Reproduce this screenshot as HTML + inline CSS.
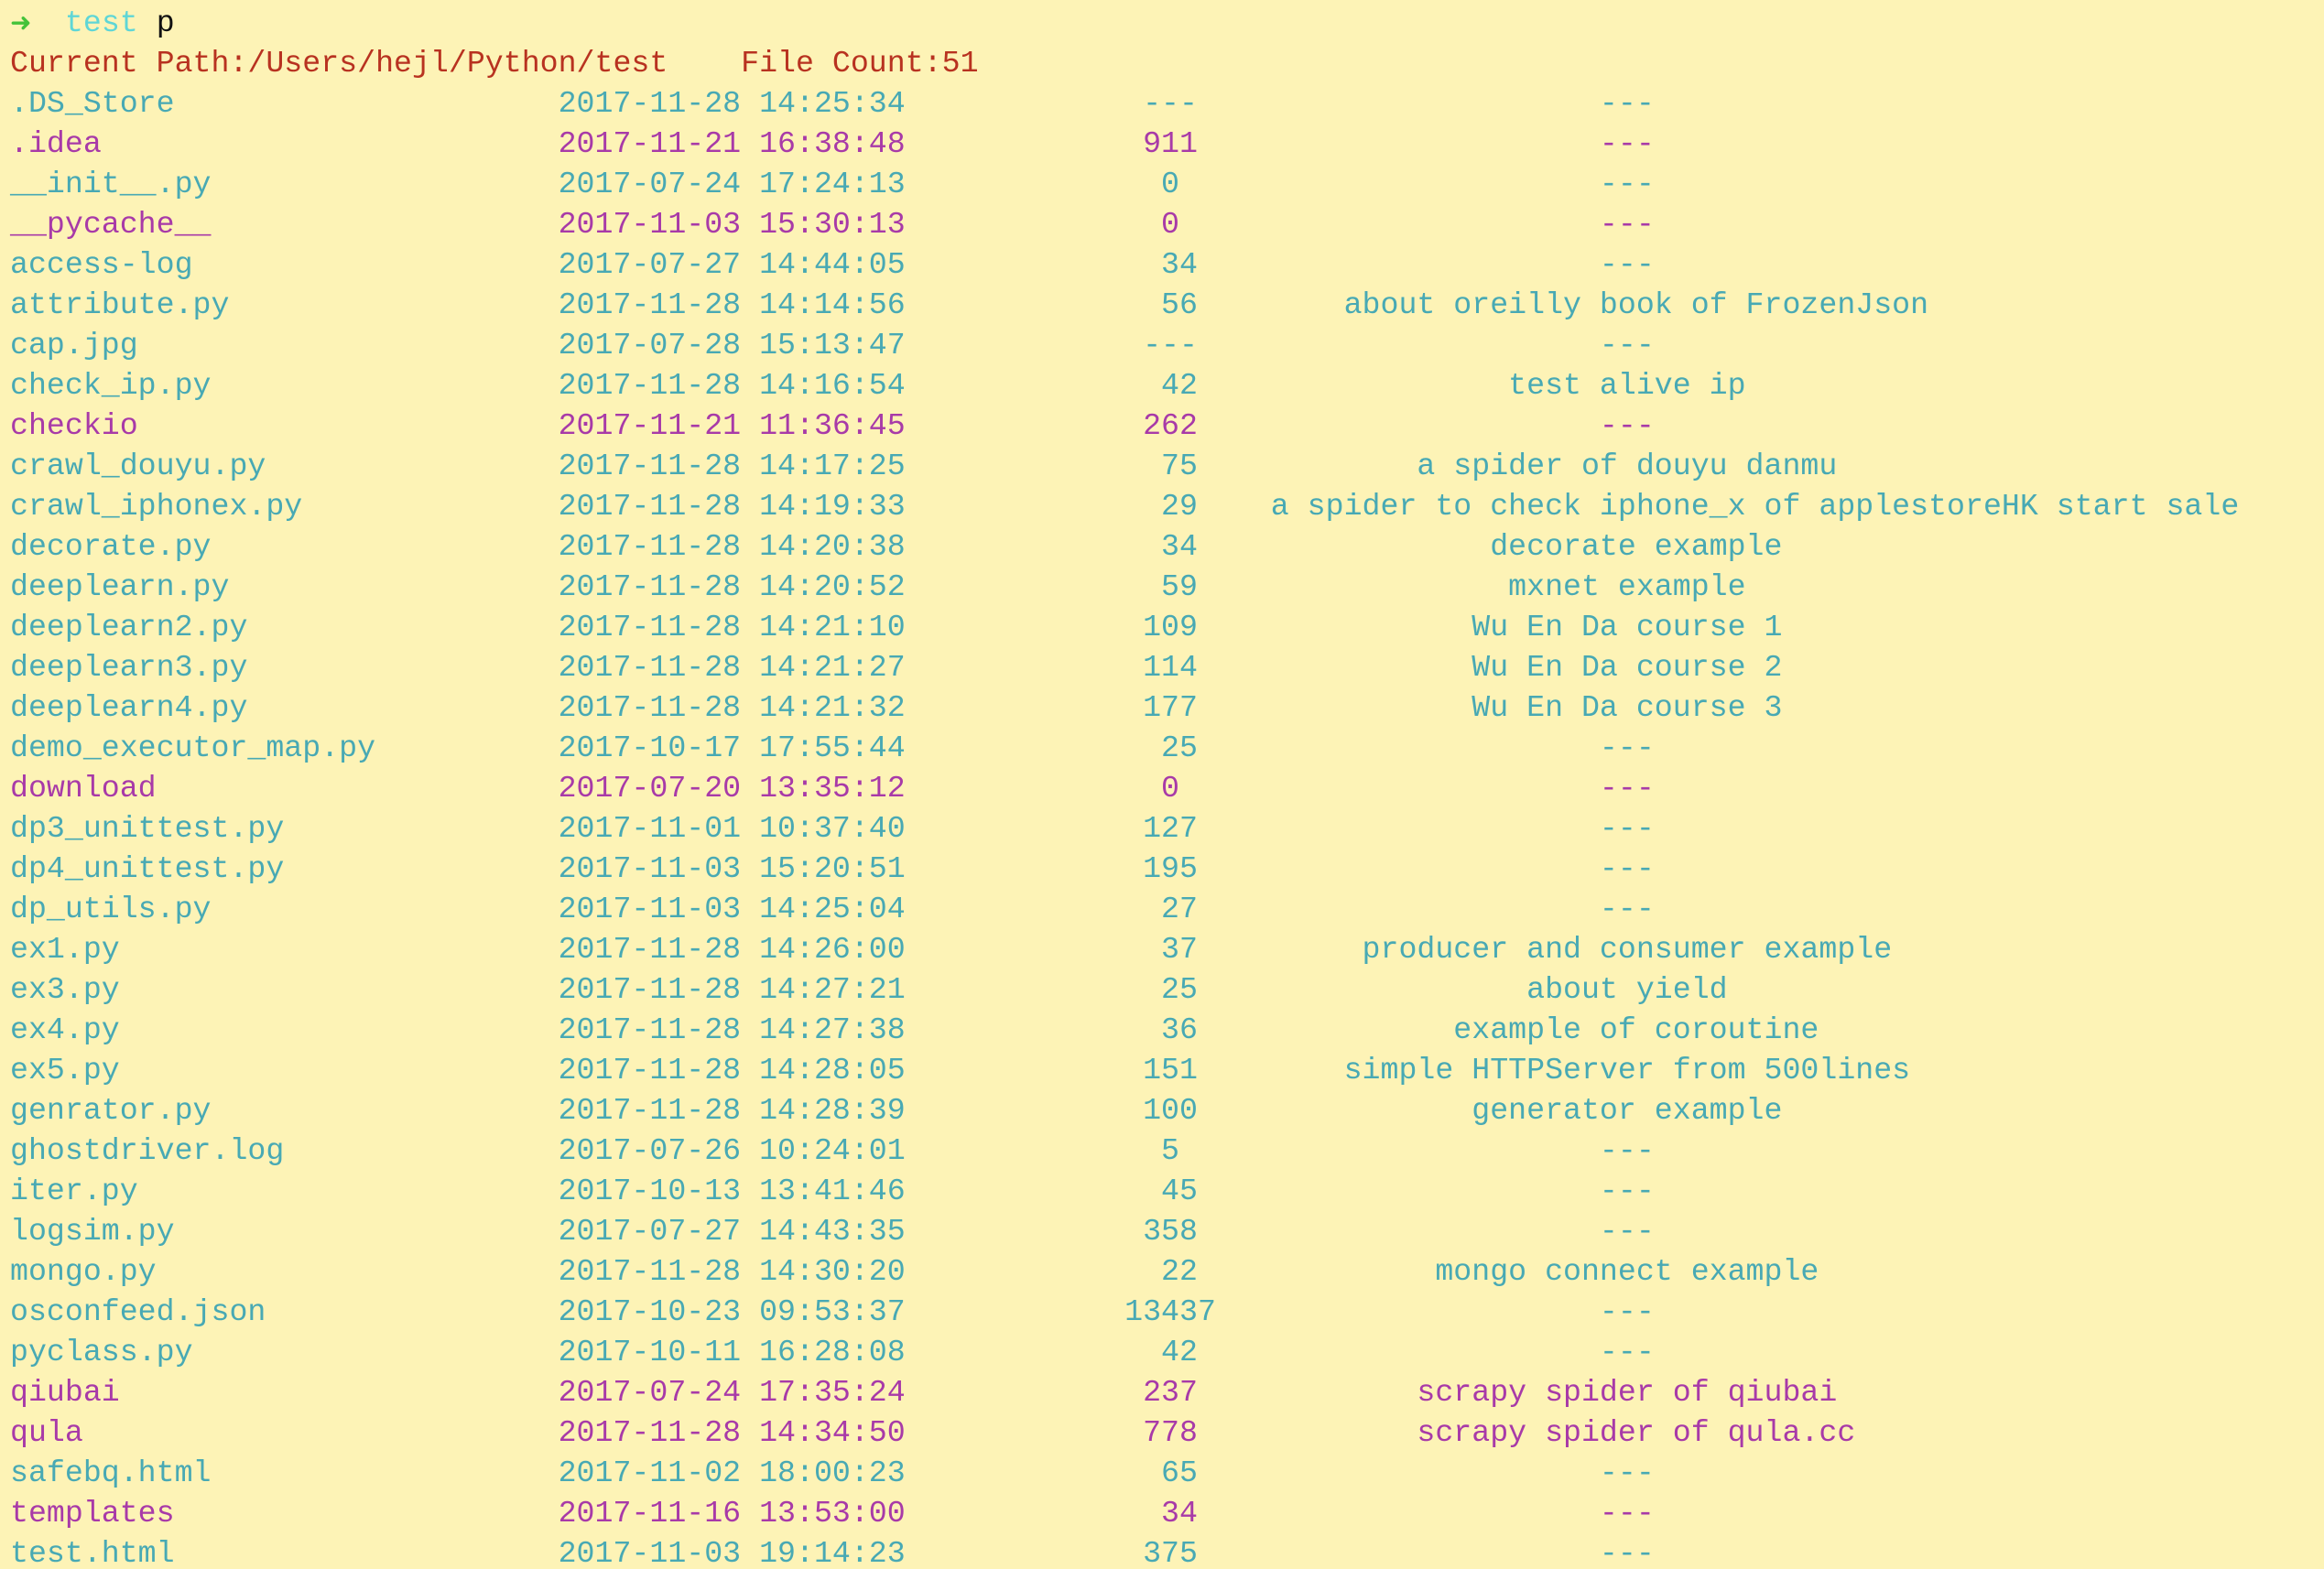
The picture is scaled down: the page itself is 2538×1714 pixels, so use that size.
<!DOCTYPE html>
<html><head><meta charset="utf-8"><style>
html,body{margin:0;padding:0;background:#fdf3b6;width:2538px;height:1714px;overflow:hidden}
pre{margin:0;padding:3px 0 0 11px;font-family:"Liberation Mono","DejaVu Sans Mono",monospace;font-size:33.25px;line-height:44px;color:#48a9b4;white-space:pre}
.m{color:#a83aa8}.r{color:#b83220}.g{color:#44c23a;font-weight:bold;display:inline-block;width:20px;font-family:"DejaVu Sans",sans-serif;font-size:28px}.c{color:#5fd6d6}.k{color:#111}
</style></head><body><pre><span class="g">➜</span>  <span class="c">test</span> <span class="k">p</span>
<span class="r">Current Path:/Users/hejl/Python/test    File Count:51</span>
.DS_Store                     2017-11-28 14:25:34             ---                      ---
<span class="m">.idea                         2017-11-21 16:38:48             911                      ---</span>
__init__.py                   2017-07-24 17:24:13              0                       ---
<span class="m">__pycache__                   2017-11-03 15:30:13              0                       ---</span>
access-log                    2017-07-27 14:44:05              34                      ---
attribute.py                  2017-11-28 14:14:56              56        about oreilly book of FrozenJson
cap.jpg                       2017-07-28 15:13:47             ---                      ---
check_ip.py                   2017-11-28 14:16:54              42                 test alive ip
<span class="m">checkio                       2017-11-21 11:36:45             262                      ---</span>
crawl_douyu.py                2017-11-28 14:17:25              75            a spider of douyu danmu
crawl_iphonex.py              2017-11-28 14:19:33              29    a spider to check iphone_x of applestoreHK start sale
decorate.py                   2017-11-28 14:20:38              34                decorate example
deeplearn.py                  2017-11-28 14:20:52              59                 mxnet example
deeplearn2.py                 2017-11-28 14:21:10             109               Wu En Da course 1
deeplearn3.py                 2017-11-28 14:21:27             114               Wu En Da course 2
deeplearn4.py                 2017-11-28 14:21:32             177               Wu En Da course 3
demo_executor_map.py          2017-10-17 17:55:44              25                      ---
<span class="m">download                      2017-07-20 13:35:12              0                       ---</span>
dp3_unittest.py               2017-11-01 10:37:40             127                      ---
dp4_unittest.py               2017-11-03 15:20:51             195                      ---
dp_utils.py                   2017-11-03 14:25:04              27                      ---
ex1.py                        2017-11-28 14:26:00              37         producer and consumer example
ex3.py                        2017-11-28 14:27:21              25                  about yield
ex4.py                        2017-11-28 14:27:38              36              example of coroutine
ex5.py                        2017-11-28 14:28:05             151        simple HTTPServer from 500lines
genrator.py                   2017-11-28 14:28:39             100               generator example
ghostdriver.log               2017-07-26 10:24:01              5                       ---
iter.py                       2017-10-13 13:41:46              45                      ---
logsim.py                     2017-07-27 14:43:35             358                      ---
mongo.py                      2017-11-28 14:30:20              22             mongo connect example
osconfeed.json                2017-10-23 09:53:37            13437                     ---
pyclass.py                    2017-10-11 16:28:08              42                      ---
<span class="m">qiubai                        2017-07-24 17:35:24             237            scrapy spider of qiubai</span>
<span class="m">qula                          2017-11-28 14:34:50             778            scrapy spider of qula.cc</span>
safebq.html                   2017-11-02 18:00:23              65                      ---
<span class="m">templates                     2017-11-16 13:53:00              34                      ---</span>
test.html                     2017-11-03 19:14:23             375                      ---
</pre></body></html>
